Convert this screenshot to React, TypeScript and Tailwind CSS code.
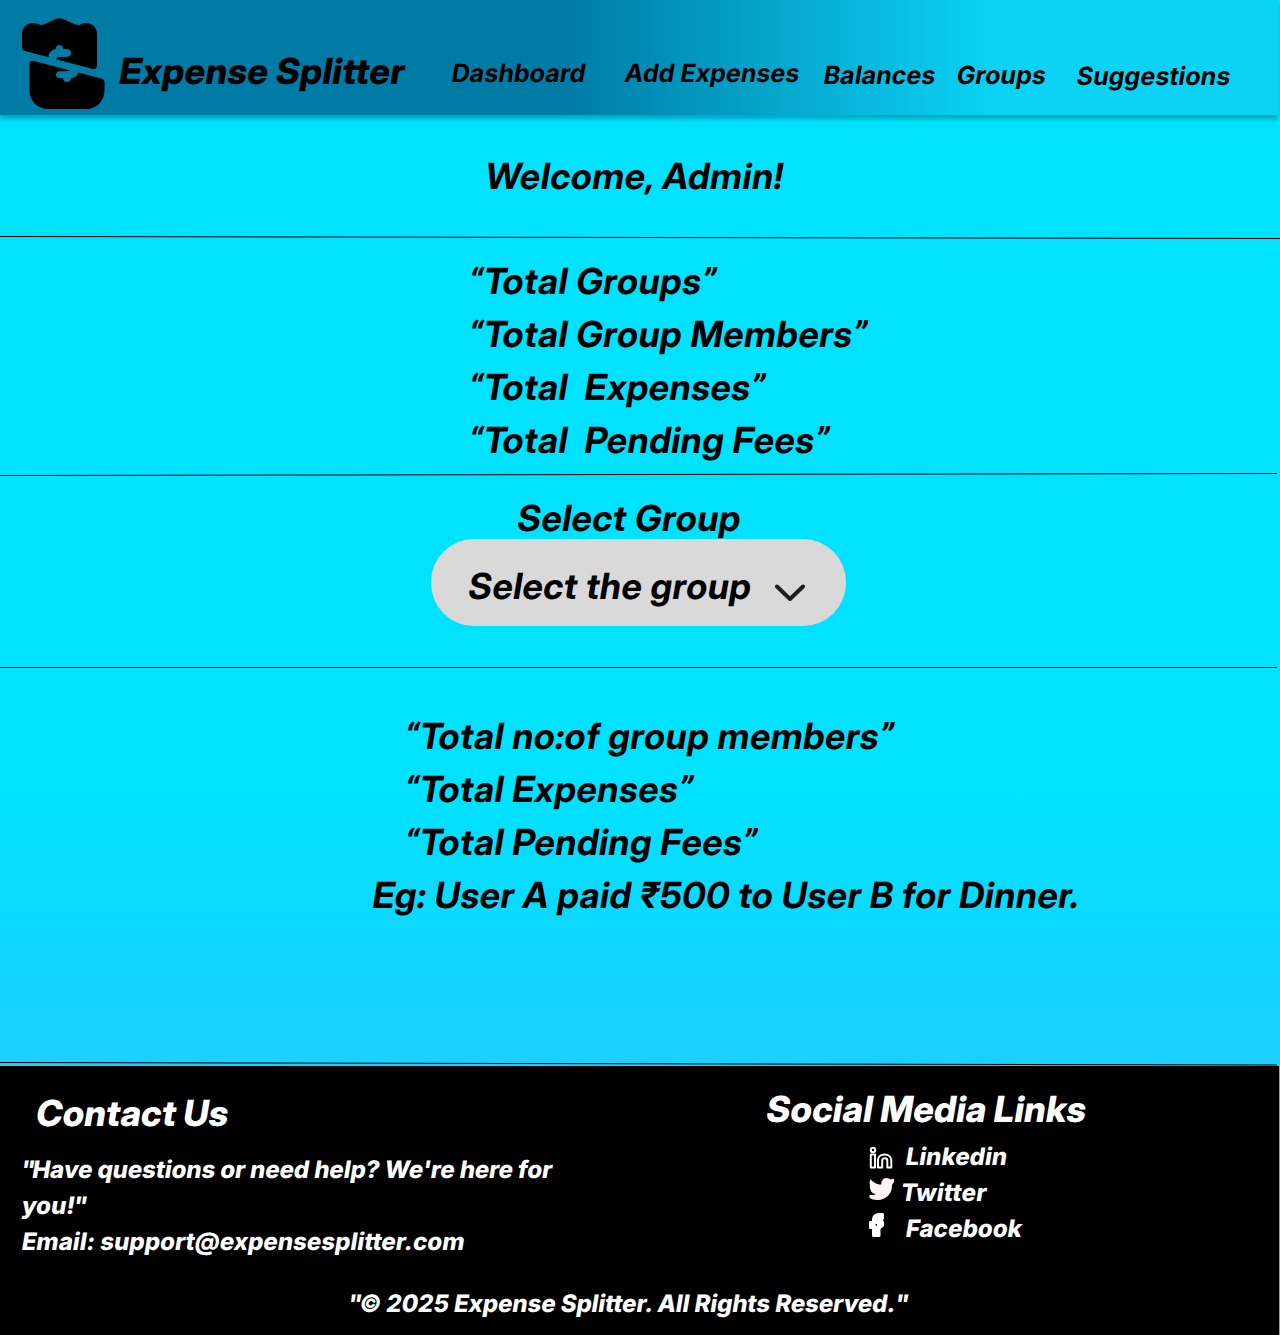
import type { ReactNode } from 'react';

const stats = ['Total Groups', 'Total Group Members', 'Total  Expenses', 'Total  Pending Fees'];
const groupStats = ['Total no:of group members', 'Total Expenses', 'Total Pending Fees'];

/** One line of slanted roman text, which keeps the two-storey "a". */
function Slant({ children }: { children: ReactNode }) {
  return <span className="inline-block whitespace-pre [transform:skewX(-9.4deg)]">{children}</span>;
}

function Quoted({ text }: { text: string }) {
  return (
    <Slant>
      <span className="-ml-px font-['Roboto',sans-serif] leading-none tracking-[0.5px]">“</span>
      {text}
      <span className="font-['Roboto',sans-serif] leading-none tracking-[-0.5px]">”</span>
    </Slant>
  );
}

function Rule({ from, to, width = 1277 }: { from: number; to: number; width?: number }) {
  return (
    <svg className="-my-1 block h-2 w-[1280px] shrink-0" viewBox="0 0 1280 8" fill="none">
      <line x1="0" y1={from} x2={width} y2={to} stroke="#000" strokeWidth="1" />
    </svg>
  );
}

function Logo() {
  return (
    <svg className="block h-[92px] w-[84px]" viewBox="21 18 84 92" fill="#000">
      <path d="M22 34 C22 27 27 23 33 23 C37 23 39 25 41.500 25 C44 25 55 18.200 59.500 18.200 C64 18.200 75 25 78 25 C80.500 25 82 23 86 23 C92 23 97 27 97 34 V65 C97 68 95 69.600 92 68.800 L56 59.300 C56.500 57.500 57.500 57 60 57 H66.500 C69.500 57 71 55 71 52.800 C71 50 69 49 66 49 H63.500 C63 46.500 61.500 45 59.500 45 C57.500 45 56 46.500 55.500 49 C51 50 48.500 53 48.500 57.200 L25 51 C23 50.500 22 49.500 22 47.500 Z" />
      <path d="M34 61 L70 70.500 C68 71.200 66 71.200 60 71.200 C57.500 71.200 56 72.500 56 74.500 C56 77 57.500 78.200 60 78.200 H63 C63.500 81 65 82 67 82 C69 82 70.500 81 71 78.200 C75 77.500 77.500 75.500 78.500 72.500 L101 78.500 C103.500 79.200 104.500 80 104.500 82.500 V90 C104.500 101 97 109 86 109 H49 C37 109 29.500 101 29.500 90 V64 C29.500 61.500 31.500 60.300 34 61 Z" />
    </svg>
  );
}

function LinkedinIcon() {
  return (
    <svg className="h-[22px] w-6" viewBox="0 0 24 22" fill="none" stroke="#fff" strokeWidth="2" strokeLinejoin="round">
      <circle cx="4" cy="3" r="2.200" />
      <path d="M1.800 7.500H6V20.500H1.800Z" />
      <path d="M9 20.500V13C9 9.500 12 7.500 15.500 7.500S22.300 9.500 22.300 13V20.500H18.300V13.500C18.300 10.500 13.200 10.500 13.200 13.500V20.500Z" />
    </svg>
  );
}

function TwitterIcon() {
  return (
    <svg className="h-[22px] w-[25px]" viewBox="0 0 25 22" fill="#fff5f5">
      <path d="M1.500 1.200C4 4.200 8 6.500 12.300 6.500C12 2.500 14.500 0 17.500 0C19.500 0 20.700 .8 21.500 1.500L25 .4V4L23 7C23.500 15 17.500 22 8.500 22C5 22 2.500 21 .5 19.700V17H4C5 17 6 16.600 6.500 16C3.500 15.500 2 14 1.700 12C.8 10 .6 8.500 1 7.500C.5 5 .4 3 1.500 1.200Z" />
    </svg>
  );
}

function FacebookIcon() {
  return (
    <svg className="h-6 w-4" viewBox="0 0 16 24" fill="#fff">
      <path fillRule="evenodd" d="M9 0H13.500Q15 0 15 1.500V5.500L14 7.500L15 9V13L11.500 16V22.500Q11.500 24 10 24H4.500Q3 24 3 22.500V16H1.500Q0 16 0 14.500V9.500Q0 8 1.500 8H3V6Q3.500 1 9 0ZM6.500 11V12.500H8V11Z" />
    </svg>
  );
}

export default function App() {
  return (
    <div className="flex h-[1335px] w-[1280px] flex-col overflow-hidden bg-[linear-gradient(180deg,#00e2ff_0px,#00e2ff_790px,#1ccfff_1065px)] font-['Inter_Display','Inter',sans-serif] text-4xl font-bold tracking-[0.55px] text-black">
      <header className="z-10 flex h-[115px] w-[1278px] shrink-0 items-start bg-[linear-gradient(90deg,#007ba5_0%,#007ba5_44%,#0bd3f5_78%)] shadow-[0_4px_4px_rgba(0,0,0,0.25)]">
        <div className="ml-[21px] mt-[18px]"><Logo /></div>
        <h1 className="ml-[14px] mt-[49px] w-[333px] whitespace-nowrap pl-px font-extrabold leading-[44px] tracking-[0.36px]"><Slant>Expense Splitter</Slant></h1>
        <nav className="flex whitespace-nowrap pt-[58px] font-['Inter',sans-serif] text-[25px] leading-[30px] tracking-[0.04px]">
          <a className="w-[173px]"><Slant>Dashboard</Slant></a>
          <a className="w-[199px]"><Slant>Add Expenses</Slant></a>
          <a className="w-[133px] pt-0.5"><Slant>Balances</Slant></a>
          <a className="w-[119px] pt-0.5"><Slant>Groups</Slant></a>
          <a className="pl-px pt-[3px]"><Slant>Suggestions</Slant></a>
        </nav>
      </header>

      <section className="flex h-[122px] shrink-0 pl-[486px] pt-[39px]">
        <h2 className="leading-[44px] tracking-[0.65px]"><Slant>Welcome, Admin!</Slant></h2>
      </section>
      <Rule from={3.5} to={5.5} width={1280} />

      <section className="h-[238px] shrink-0 pl-[470px] pt-[18px] leading-[53px]">
        {stats.map((s) => <p key={s} className="h-[53px]"><Quoted text={s} /></p>)}
      </section>
      <Rule from={4.5} to={2.5} />

      <section className="h-[192px] shrink-0 pt-[22px]">
        <h2 className="ml-[518px] leading-[42px]"><Slant>Select Group</Slant></h2>
        <button className="ml-[431px] flex h-[87px] w-[415px] items-center rounded-[43px] bg-[#d9d9d9] pl-[38px] pt-1.5 tracking-[0.55px]">
          <span className="w-[306px] text-left"><Slant>Select the group</Slant></span>
          <svg className="mt-3.5 h-[18px] w-[30px]" viewBox="0 0 30 18" fill="none" stroke="#1e1e1e" strokeWidth="4" strokeLinecap="round" strokeLinejoin="round">
            <path d="M2 2.500L15 15L28 2.500" />
          </svg>
        </button>
      </section>
      <Rule from={4.5} to={4.5} />

      <section className="h-[397px] shrink-0 pl-[406px] pt-[43px] leading-[53px]">
        {groupStats.map((s) => <p key={s} className="h-[53px]"><Quoted text={s} /></p>)}
        <p className="-ml-[33px] whitespace-nowrap"><Slant>Eg: User A paid ₹500 to User B for Dinner.</Slant></p>
      </section>
      <Rule from={2.5} to={5} />

      <footer className="mt-0.5 flex h-[269px] w-[1279px] shrink-0 flex-col bg-black font-extrabold text-white">
        <div className="flex">
          <div className="w-[766px] pl-[22px] pt-[25px]">
            <h2 className="pl-[15px] leading-[44px] tracking-[0.15px]"><Slant>Contact Us</Slant></h2>
            <div className="mt-[17px] font-['Inter',sans-serif] text-2xl leading-9 tracking-normal">
              <p className="-ml-px tracking-[-0.1px]"><Slant><span className="tracking-[-2.5px]">"</span>Have questions or need help? We're here for</Slant></p>
              <p><Slant>you<span className="tracking-[-1.5px]">!</span>"</Slant></p>
              <p className="tracking-[0.04px]"><Slant>Email: support@expensesplitter.com</Slant></p>
            </div>
          </div>
          <div className="pt-[21px]">
            <h2 className="whitespace-nowrap pl-px leading-[44px] tracking-[0.22px]"><Slant>Social Media Links</Slant></h2>
            <ul className="ml-[103px] mt-2 font-['Inter',sans-serif] text-2xl leading-9 tracking-[0.04px]">
              <li className="flex"><span className="w-[37px] pt-2"><LinkedinIcon /></span><Slant>Linkedin</Slant></li>
              <li className="flex tracking-[0.3px]"><span className="w-8 pt-[3px]"><TwitterIcon /></span><Slant>Twitter</Slant></li>
              <li className="flex"><span className="w-[37px] pt-0.5"><FacebookIcon /></span><Slant>Facebook</Slant></li>
            </ul>
          </div>
        </div>
        <p className="ml-[348px] mt-[26px] font-['Inter',sans-serif] text-2xl leading-9 tracking-[-0.08px]"><Slant><span className="tracking-[-2.5px]">"</span>© 2025 Expense Splitter. All Rights Reserved<span className="tracking-[-1px]">.</span>"</Slant></p>
      </footer>
    </div>
  );
}
